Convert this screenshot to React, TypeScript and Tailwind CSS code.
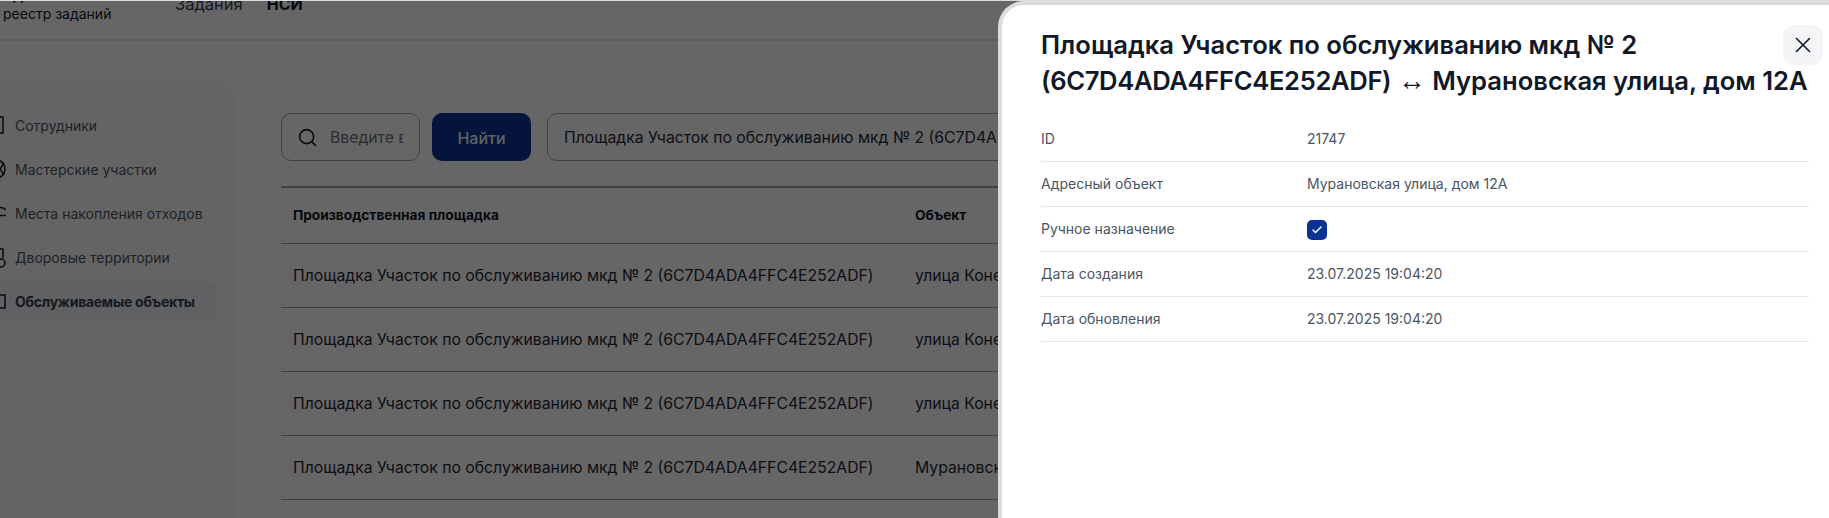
import { Search, X, Check } from "lucide-react";

const navItems = [
  {
    label: "Сотрудники",
    icon: <path d="M12 4h9v16h-9" />,
  },
  {
    label: "Мастерские участки",
    icon: (
      <>
        <circle cx="14" cy="12" r="9" />
        <path d="M14 6l8 12M22 6l-8 12" />
      </>
    ),
  },
  {
    label: "Места накопления отходов",
    icon: <path d="M12 11C15 6 20 5 24 9M12 14.5h12" />,
  },
  {
    label: "Дворовые территории",
    icon: (
      <>
        <path d="M14 4h7v9" />
        <circle cx="19" cy="18" r="4" />
      </>
    ),
  },
  {
    label: "Обслуживаемые объекты",
    icon: <path d="M12 6h11v13H12" />,
    active: true,
  },
];

const rows = ["улица Конева, дом 4", "улица Конева, дом 6", "улица Конева, дом 8", "Мурановская улица, дом 12А"];

const site = "Площадка Участок по обслуживанию мкд № 2 (6C7D4ADA4FFC4E252ADF)";

const details = [
  { label: "ID", value: "21747" },
  { label: "Адресный объект", value: "Мурановская улица, дом 12А" },
  { label: "Ручное назначение", checked: true },
  { label: "Дата создания", value: "23.07.2025 19:04:20" },
  { label: "Дата обновления", value: "23.07.2025 19:04:20" },
];

export default function App() {
  return (
    <div className="relative h-[518px] w-[1829px] overflow-hidden bg-white font-['Inter',sans-serif] text-[#111827]">
      <header className="flex h-[41px] items-start border-b-2 border-[#e5e7eb] pl-[3px]">
        <div className="-mt-[16px] w-[172px] text-[#111827]">
          <div className="text-[16px] font-bold leading-[20px]">Единый</div>
          <div className="text-[14px] leading-[20px]">реестр заданий</div>
        </div>
        <nav className="-mt-[8px] flex gap-[24px] text-[16.5px] leading-[24px]">
          <span className="text-[#374151]">Задания</span>
          <span className="text-[16px] font-bold text-[#111827]">НСИ</span>
        </nav>
      </header>

      <div className="flex h-[477px] pt-[39px]">
        <aside className="h-full w-[236px] shrink-0 rounded-tr-[24px] bg-[#f9fafb] pt-[25px]">
          <ul className="flex w-[217px] flex-col gap-[4px]">
            {navItems.map((item) => (
              <li
                key={item.label}
                className={`flex h-[40px] items-center gap-[9px] rounded-r-[10px] text-[14px] ${
                  item.active ? "bg-[#f1f3f6] font-bold tracking-[-0.27px] text-[#374151]" : "text-[#4b5563]"
                }`}
              >
                <svg
                  viewBox="0 0 24 24"
                  fill="none"
                  stroke="#111827"
                  strokeWidth="1.5"
                  className="-ml-[18px] h-[24px] w-[24px] shrink-0"
                >
                  {item.icon}
                </svg>
                {item.label}
              </li>
            ))}
          </ul>
        </aside>

        <main className="ml-[12px] min-w-0 flex-1 rounded-tl-[24px] bg-white pl-[33px] pt-[33px]">
          <div className="flex">
            <div className="flex h-[48px] w-[139px] shrink-0 items-center rounded-[10px] border border-[#9ca3af] pl-[15px]">
              <Search className="h-[21px] w-[21px] shrink-0 text-[#111827]" strokeWidth={1.75} />
              <span className="ml-[12px] w-[73px] overflow-hidden whitespace-nowrap pt-[1px] text-[15.75px] text-[#6b7280]">
                Введите вопрос
              </span>
            </div>
            <button className="ml-[12px] h-[48px] w-[99px] shrink-0 rounded-[10px] bg-[#0a3291] pt-[1px] text-[16px] font-medium text-[#f3f4f6]">
              Найти
            </button>
            <div className="ml-[16px] flex h-[48px] flex-1 items-center overflow-hidden whitespace-nowrap rounded-[10px] border border-[#9ca3af] pl-[16px] pt-[1px] text-[15.75px] text-[#1f2937]">
              {site}
            </div>
          </div>

          <div className="mt-[25px] border-t-2 border-[#9ca3af]">
            <div className="flex h-[56px] items-center border-b border-[#9ca3af] pl-[12px] text-[13.7px] font-bold text-[#111827]">
              <span className="w-[622px]">Производственная площадка</span>
              <span>Объект</span>
            </div>
            {rows.map((address) => (
              <div
                key={address}
                className="flex h-[64px] items-center border-b border-[#9ca3af] pl-[12px] text-[15.75px] text-[#1f2937]"
              >
                <span className="w-[622px] shrink-0 whitespace-nowrap">{site}</span>
                <span className="whitespace-nowrap">{address}</span>
              </div>
            ))}
          </div>
        </main>
      </div>

      <div className="absolute inset-0 bg-black/60" />

      <div className="absolute inset-x-0 top-0 h-[1px] bg-[#dcdcdc]" />

      <section className="absolute bottom-0 left-[998px] right-0 top-[1px] rounded-tl-[26px] border-l-[4px] border-t-[4px] border-[#dcdcdc] bg-white pl-[39px] pr-[20px]">
        <button className="absolute right-[6px] top-[20px] flex h-[40px] w-[40px] items-center justify-center rounded-[10px] bg-[#f3f4f6]">
          <X className="h-[26px] w-[26px] text-[#111827]" strokeWidth={1.5} />
        </button>
        <h2 className="whitespace-nowrap pt-[22px] text-[25.6px] font-semibold leading-[36px] text-[#111827]">
          Площадка Участок по обслуживанию мкд № 2
          <br />
          <span className="tracking-[-0.35px]">(6C7D4ADA4FFC4E252ADF)</span>{" "}
          <span className="font-['Liberation_Serif'] text-[28px] font-normal">↔</span> Мурановская улица, дом 12А
        </h2>
        <div className="mt-[18px]">
          {details.map((row) => (
            <div key={row.label} className="flex h-[45px] items-center border-b border-[#e5e7eb] pb-[2px] text-[14px] text-[#4b5563]">
              <span className="w-[266px] shrink-0">{row.label}</span>
              {row.checked ? (
                <span className="mt-[4px] flex h-[20px] w-[20px] items-center justify-center rounded-[5px] bg-[#0a3291]">
                  <Check className="h-[12px] w-[12px] text-white" strokeWidth={3} />
                </span>
              ) : (
                <span>{row.value}</span>
              )}
            </div>
          ))}
        </div>
      </section>
    </div>
  );
}
